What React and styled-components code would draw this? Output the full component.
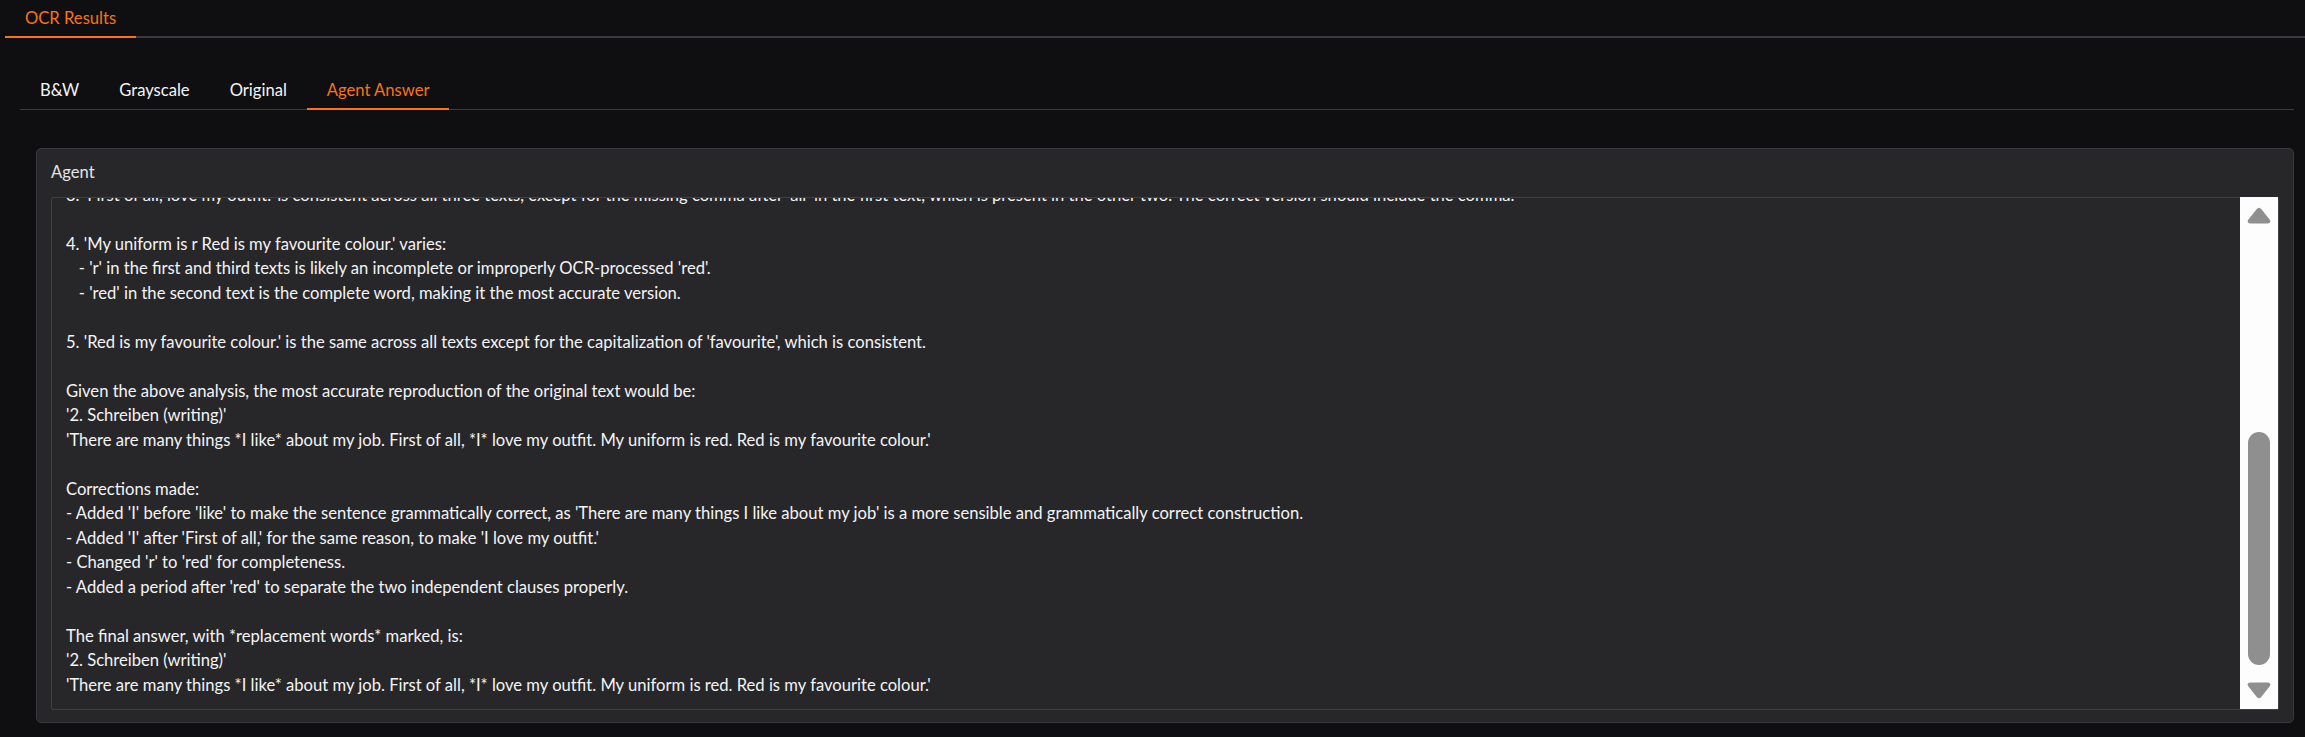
import React from "react";
import styled, { createGlobalStyle } from "styled-components";

const GlobalStyle = createGlobalStyle`
  html, body {
    margin: 0;
    padding: 0;
    background: #0f0f11;
  }
  body {
    font-family: Lato, "Noto Sans", sans-serif;
    font-size: 16.6px;
    color: #f4f4f5;
  }
`;

const Page = styled.div`
  display: flex;
  flex-direction: column;
  width: 2305px;
  height: 737px;
  overflow: hidden;
`;

const TopBar = styled.div`
  display: flex;
  margin-left: 5px;
  border-bottom: 2px solid #3b3b3f;
`;

const TopTab = styled.div`
  padding: 0 20px;
  line-height: 36px;
  margin-bottom: -2px;
  color: ${(p) => (p.$active ? "#f97316" : "#f4f4f5")};
  border-bottom: 2px solid ${(p) => (p.$active ? "#f97316" : "transparent")};
`;

const Panel = styled.div`
  display: flex;
  flex-direction: column;
  margin: 34px 11px 0 20px;
`;

const SubBar = styled.div`
  display: flex;
  border-bottom: 1px solid #3b3b3f;
`;

const SubTab = styled.div`
  padding: 0 20px;
  line-height: 36px;
  margin-bottom: -1px;
  color: ${(p) => (p.$active ? "#f97316" : "#f4f4f5")};
  border-bottom: 2px solid ${(p) => (p.$active ? "#f97316" : "transparent")};
`;

const Box = styled.div`
  display: flex;
  flex-direction: column;
  gap: 12px;
  margin: 38px 0 0 16px;
  height: 575px;
  box-sizing: border-box;
  padding: 11px 14px 12px 14px;
  background: #27272a;
  border: 1px solid #38383d;
  border-radius: 5px;
`;

const Label = styled.div`
  line-height: 24.5px;
  color: #e4e4e7;
`;

const Field = styled.div`
  flex: 1;
  min-height: 0;
  display: flex;
  border: 1px solid #3f3f45;
  border-radius: 2px;
  background: #27272a;
`;

const TextView = styled.div`
  flex: 1;
  min-width: 0;
  display: flex;
  flex-direction: column;
  justify-content: flex-end;
  overflow: hidden;
  padding: 0 14px 12px 14px;
`;

const Text = styled.div`
  white-space: pre-wrap;
  line-height: 24.5px;
  color: #f4f4f5;
`;

const ScrollBar = styled.div`
  width: 38px;
  flex: none;
  display: flex;
  flex-direction: column;
  align-items: center;
  padding: 10px 0;
  box-sizing: border-box;
  background: #fdfdfd;
  margin-top: -1px;
`;

const Arrow = styled.svg`
  width: 24px;
  height: 17px;
  flex: none;
  display: block;
`;

const Track = styled.div`
  flex: 1;
  display: flex;
  flex-direction: column;
  justify-content: flex-end;
  padding-bottom: 17px;
`;

const Thumb = styled.div`
  width: 22px;
  height: 233px;
  border-radius: 11px;
  background: #8f8f8f;
`;

const content = `3. 'First of all, love my outfit.' is consistent across all three texts, except for the missing comma after 'all' in the first text, which is present in the other two. The correct version should include the comma.

4. 'My uniform is r Red is my favourite colour.' varies:
   - 'r' in the first and third texts is likely an incomplete or improperly OCR-processed 'red'.
   - 'red' in the second text is the complete word, making it the most accurate version.

5. 'Red is my favourite colour.' is the same across all texts except for the capitalization of 'favourite', which is consistent.

Given the above analysis, the most accurate reproduction of the original text would be:
'2. Schreiben (writing)'
'There are many things *I like* about my job. First of all, *I* love my outfit. My uniform is red. Red is my favourite colour.'

Corrections made:
- Added 'I' before 'like' to make the sentence grammatically correct, as 'There are many things I like about my job' is a more sensible and grammatically correct construction.
- Added 'I' after 'First of all,' for the same reason, to make 'I love my outfit.'
- Changed 'r' to 'red' for completeness.
- Added a period after 'red' to separate the two independent clauses properly.

The final answer, with *replacement words* marked, is:
'2. Schreiben (writing)'
'There are many things *I like* about my job. First of all, *I* love my outfit. My uniform is red. Red is my favourite colour.'`;

const UpArrow = () => (
  <Arrow viewBox="0 0 24 17">
    <path
      d="M9.6 2.2 Q12 -0.8 14.4 2.2 L22.6 12.6 Q24.6 16.2 20.6 16.6 L3.4 16.6 Q-0.6 16.2 1.4 12.6 Z"
      fill="#8f8f8f"
    />
  </Arrow>
);

const DownArrow = () => (
  <Arrow viewBox="0 0 24 17">
    <path
      d="M9.6 14.8 Q12 17.8 14.4 14.8 L22.6 4.4 Q24.6 0.8 20.6 0.4 L3.4 0.4 Q-0.6 0.8 1.4 4.4 Z"
      fill="#8f8f8f"
    />
  </Arrow>
);

export default function App() {
  const subTabs = ["B&W", "Grayscale", "Original", "Agent Answer"];
  return (
    <>
      <GlobalStyle />
      <Page>
        <TopBar>
          <TopTab $active>OCR Results</TopTab>
        </TopBar>
        <Panel>
          <SubBar>
            {subTabs.map((t) => (
              <SubTab key={t} $active={t === "Agent Answer"}>
                {t}
              </SubTab>
            ))}
          </SubBar>
          <Box>
            <Label>Agent</Label>
            <Field>
              <TextView>
                <Text>{content}</Text>
              </TextView>
              <ScrollBar>
                <UpArrow />
                <Track>
                  <Thumb />
                </Track>
                <DownArrow />
              </ScrollBar>
            </Field>
          </Box>
        </Panel>
      </Page>
    </>
  );
}
